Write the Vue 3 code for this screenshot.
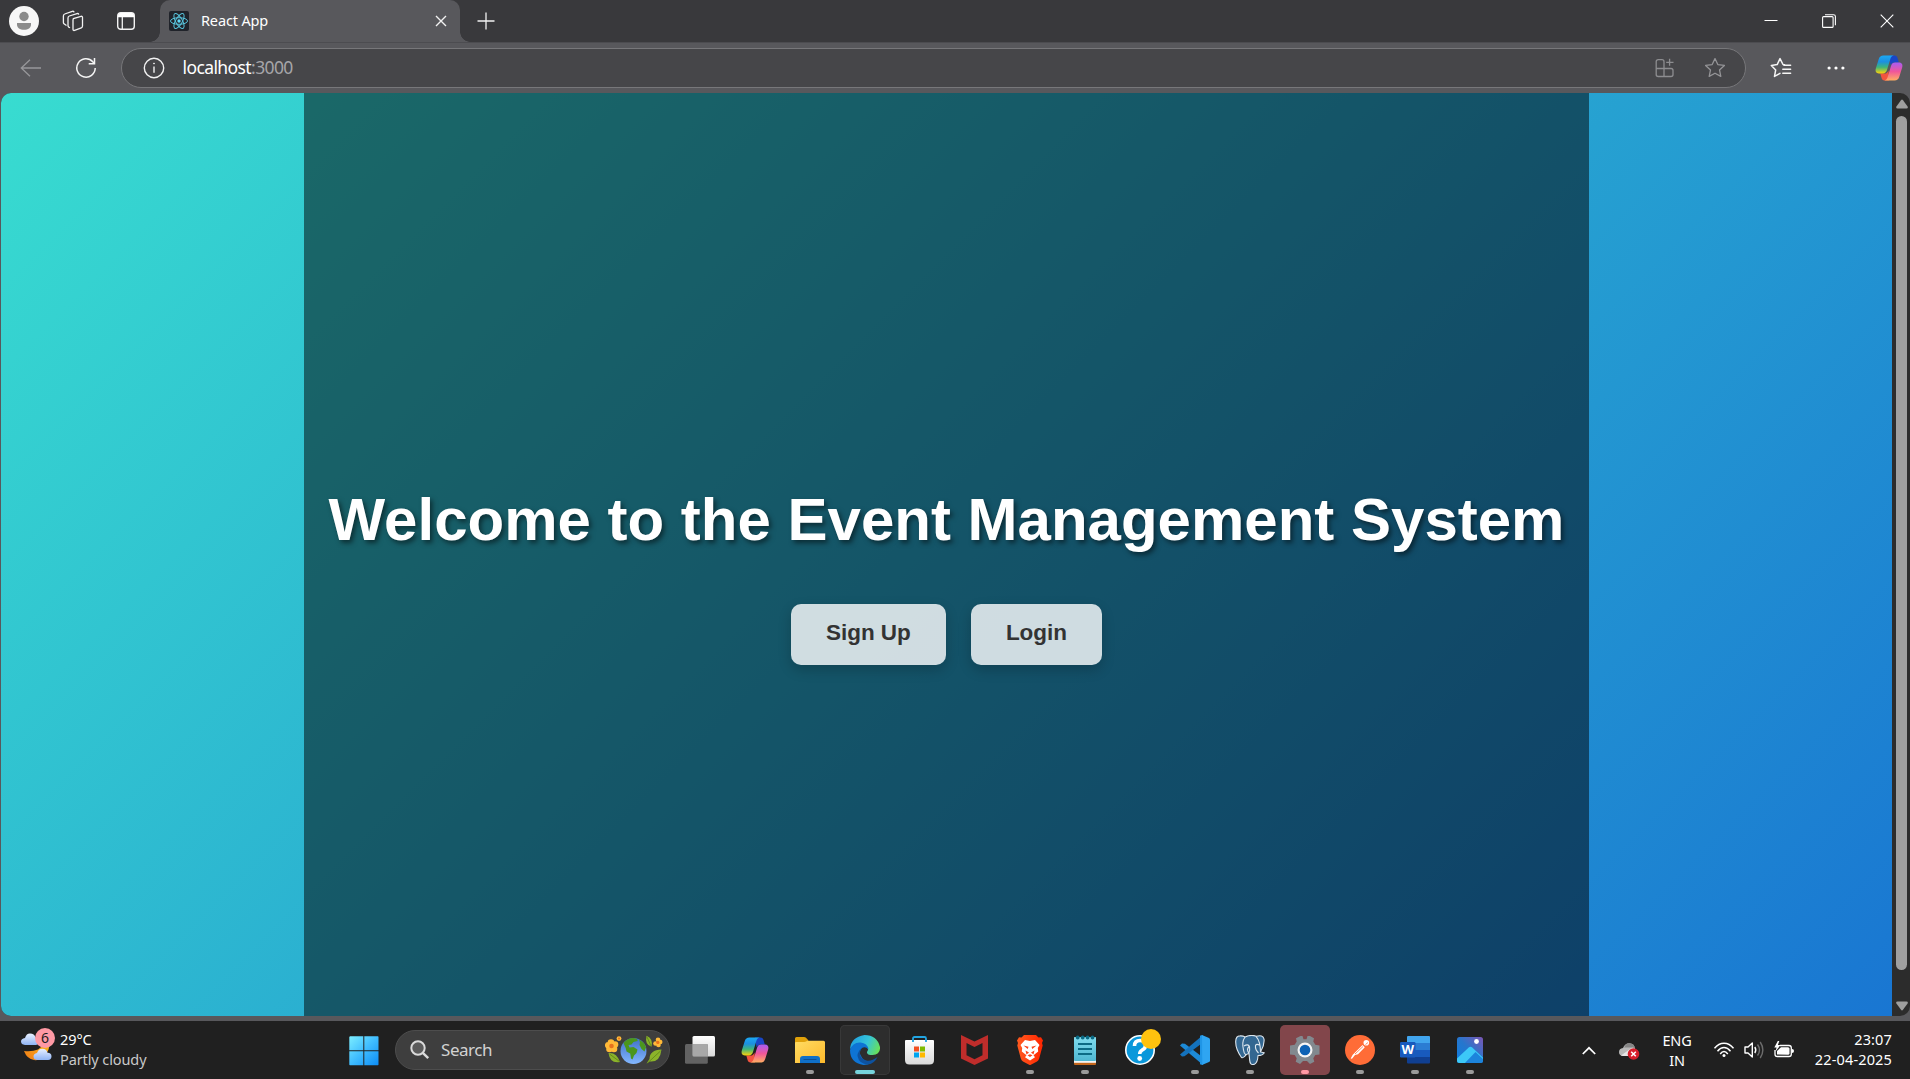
<script setup>
const title = 'Welcome to the Event Management System'
</script>

<template>
  <div class="screen">
    <svg class="defs" width="0" height="0">
      <defs>
        <linearGradient id="cpA" x1="0" y1="0" x2="0" y2="1">
          <stop offset="0" stop-color="#1ba9f4" /><stop offset=".35" stop-color="#1c8fe0" /><stop offset=".65" stop-color="#3fb579" /><stop offset="1" stop-color="#ffd20a" />
        </linearGradient>
        <linearGradient id="cpB" x1="0" y1="0" x2="0" y2="1">
          <stop offset="0" stop-color="#a65cf5" /><stop offset=".5" stop-color="#f0569a" /><stop offset="1" stop-color="#ffae62" />
        </linearGradient>
        <linearGradient id="folder" x1="0" y1="0" x2="1" y2="1">
          <stop offset="0" stop-color="#ffdc63" /><stop offset="1" stop-color="#fdb92b" />
        </linearGradient>
        <linearGradient id="edgeTop" x1="0" y1=".3" x2="1" y2=".6">
          <stop offset="0" stop-color="#1f9ee0" /><stop offset=".55" stop-color="#35c4d8" /><stop offset="1" stop-color="#68e05a" />
        </linearGradient>
        <linearGradient id="win" x1="0" y1="0" x2="1" y2="1">
          <stop offset="0" stop-color="#7ceeff" /><stop offset=".5" stop-color="#3fbcff" /><stop offset="1" stop-color="#0c8cf5" />
        </linearGradient>
        <linearGradient id="white" x1="0" y1="0" x2="0" y2="1"><stop offset="0" stop-color="#fff" /><stop offset="1" stop-color="#d9d9d9" /></linearGradient>
        <linearGradient id="brave" x1="0" y1="0" x2="1" y2="0"><stop offset="0" stop-color="#ff5a1f" /><stop offset="1" stop-color="#ff2500" /></linearGradient>
        <linearGradient id="note" x1="0" y1="0" x2="0" y2="1"><stop offset="0" stop-color="#80dcee" /><stop offset="1" stop-color="#4fb8d2" /></linearGradient>
        <linearGradient id="photo" x1="0" y1="1" x2="1" y2="0"><stop offset="0" stop-color="#0d7de0" /><stop offset=".5" stop-color="#2676cd" /><stop offset="1" stop-color="#7d56b4" /></linearGradient>
        <linearGradient id="cloud" x1="0" y1="0" x2="0" y2="1"><stop offset="0" stop-color="#e9f1ff" /><stop offset="1" stop-color="#8fb4f4" /></linearGradient>
        <linearGradient id="moon" x1="0" y1="1" x2="1" y2="0"><stop offset="0" stop-color="#f07a16" /><stop offset="1" stop-color="#ffc21c" /></linearGradient>
        <linearGradient id="globe" x1="0" y1="0" x2="0" y2="1"><stop offset="0" stop-color="#3f70c8" /><stop offset="1" stop-color="#83b7ff" /></linearGradient>
        <symbol id="copilot" viewBox="0 0 28 26">
          <path d="M14 .5h5.5c1.8 0 2.600 1 3.100 2.700l1.200 4.300h-4.300c-2 0-3.200 1-3.900 3.100z" fill="#1846c7" />
          <path d="M14 25.500H9.500c-1.700 0-2.500-1-3-2.700L5.300 18.500h4.200c2 0 3.300-1 4-3.100z" fill="#f2533f" />
          <path d="M8.500.5h10.200c-2 .3-2.900 1.800-3.500 4l-3.200 10.600c-.7 2.300-2 3.400-4.200 3.400H4C1 18.500 0 16.200.9 13.300L3.700 4.300C4.500 1.700 5.900.5 8.500.5z" fill="url(#cpA)" />
          <path d="M19.500 25.500H9.300c2-.3 2.900-1.800 3.500-4L16 10.900c.7-2.300 2-3.400 4.200-3.400H24c3 0 4 2.300 3.100 5.200l-2.800 9c-.8 2.600-2.200 3.800-4.800 3.800z" fill="url(#cpB)" />
        </symbol>
      </defs>
    </svg>

    <header class="strip">
      <div class="left-tools">
        <svg class="avatar" width="30" height="30" viewBox="0 0 30 30"><circle cx="15" cy="15" r="15" fill="#f7f7f7" /><circle cx="15" cy="10.500" r="4.700" fill="#8b8b8b" /><path d="M8 17h14v1.500c0 3.500-3 5.300-7 5.300s-7-1.800-7-5.300z" fill="#8b8b8b" /></svg>
        <svg width="22" height="22" viewBox="0 0 22 22" fill="none" stroke="#f2f2f2" stroke-width="1.300" stroke-linejoin="round"><path d="M11.300 8.600l7.700-2.300q1.500-.3 1.500 1.200v8.600q0 1.400-1.200 1.800l-6.700 2.500q-1.600.5-1.600-1.200v-9.200q0-1.100.8-1.400z" /><path d="M8 17.800l-1.200-.7q-.8-.5-.8-1.500V8q0-1.600 1.300-2L15 3.600q1.500-.4 1.700 1" /><path d="M4.500 15.500L2.300 14q-.9-.6-.9-1.600V6q0-1.600 1.300-2L10.300 1.300q1.500-.4 1.700 1" /></svg>
        <svg width="18" height="18" viewBox="0 0 18 18"><rect x=".7" y=".7" width="16.600" height="16.600" rx="3" fill="none" stroke="#f2f2f2" stroke-width="1.400" /><path d="M1 5.300V3.500Q1 1 3.500 1h11Q17 1 17 3.500v1.800z" fill="#fff" /><path d="M5.300 5v12" stroke="#f2f2f2" stroke-width="1.300" /></svg>
      </div>
      <div class="tab">
        <svg class="favicon" width="20" height="20" viewBox="0 0 20 20"><rect width="20" height="20" rx="2" fill="#20232a" /><g fill="none" stroke="#58c4dc" stroke-width="1"><ellipse cx="10" cy="10" rx="8.500" ry="3.300" /><ellipse cx="10" cy="10" rx="8.500" ry="3.300" transform="rotate(60 10 10)" /><ellipse cx="10" cy="10" rx="8.500" ry="3.300" transform="rotate(120 10 10)" /></g><circle cx="10" cy="10" r="1.700" fill="#61dafb" /></svg>
        <span class="tab-title">React App</span>
        <svg width="12" height="12" viewBox="0 0 12 12" stroke="#f2f2f2" stroke-width="1.400"><path d="M1 1l10 10M11 1L1 11" /></svg>
      </div>
      <svg class="plus" width="18" height="18" viewBox="0 0 18 18" stroke="#f2f2f2" stroke-width="1.300"><path d="M9 .5v17M.5 9h17" /></svg>
      <div class="window-controls">
        <svg width="14" height="14" viewBox="0 0 14 14"><path d="M.5 6.500h13" stroke="#fff" /></svg>
        <svg width="14" height="14" viewBox="0 0 14 14" fill="none" stroke="#fff" stroke-width="1.100"><rect x=".6" y="2.600" width="10.500" height="10.800" rx="1" /><path d="M3 .7h8.500q1.900 0 1.900 1.900v8.700" /></svg>
        <svg width="14" height="14" viewBox="0 0 14 14" stroke="#fff" stroke-width="1.100"><path d="M.7.7l12.600 12.600M13.300.7L.7 13.300" /></svg>
      </div>
    </header>

    <div class="toolbar">
      <svg class="back" width="22" height="18" viewBox="0 0 22 18" fill="none" stroke="#97979a" stroke-width="1.300"><path d="M10 .8L1.300 9l8.700 8.200M1.300 9H21" /></svg>
      <svg class="reload" width="22" height="22" viewBox="0 0 22 22" fill="none" stroke="#f5f5f5" stroke-width="1.500"><path d="M20.200 11a9.200 9.200 0 1 1-2.400-6.200l1.400 1.700" /><path d="M19.500 1v5.800h-5.800" /></svg>
      <div class="address">
        <svg width="22" height="22" viewBox="0 0 22 22" fill="none" stroke="#f2f2f2" stroke-width="1.400"><circle cx="11" cy="11" r="9.700" /><path d="M11 9.500v6.300" /><circle cx="11" cy="6.500" r=".5" fill="#f2f2f2" stroke-width=".9" /></svg>
        <span class="url"><b>localhost</b>:3000</span>
        <svg width="20" height="20" viewBox="0 0 20 20" fill="none" stroke="#8d8d90" stroke-width="1.300"><path d="M9 10.200V3.700Q9 1.700 7 1.700H3.200q-2 0-2 2V16.500q0 2 2 2H16q2 0 2-2v-4q0-2-2-2H1.200M9 10.500v8" /><path d="M14.600.8v7M11.200 4.300H18.500" /></svg>
        <svg class="star" width="22" height="22" viewBox="0 0 22 22" fill="none" stroke="#949497" stroke-width="1.300" stroke-linejoin="round"><path d="M11 1.600l2.800 6 6.600.8-4.900 4.500 1.300 6.500-5.800-3.200-5.800 3.200 1.300-6.500L1.600 8.400l6.600-.8z" /></svg>
      </div>
      <svg class="favs" width="22" height="22" viewBox="0 0 22 22" fill="none" stroke="#f5f5f5" stroke-width="1.500" stroke-linejoin="round" stroke-linecap="round"><path d="M14.500 7.700L13 7.500 10 1.600l-2.800 6L1.300 8.400l4.400 4.500-1.200 6.500 5.500-3.100" /><path d="M14 8.200h6.600M12.800 12.300h7.800M12.800 16.300h7.800" /></svg>
      <svg class="dots" width="18" height="4" viewBox="0 0 18 4" fill="#fff"><circle cx="2.100" cy="2" r="1.600" /><circle cx="9" cy="2" r="1.600" /><circle cx="15.900" cy="2" r="1.600" /></svg>
      <svg class="cp" width="28" height="26"><use href="#copilot" /></svg>
    </div>

    <div class="viewport">
      <div class="page">
        <main class="hero">
          <h1>{{ title }}</h1>
          <div class="actions"><button>Sign Up</button><button>Login</button></div>
        </main>
      </div>
      <div class="scrollbar">
        <svg width="12" height="10" viewBox="0 0 12 10"><path d="M5 1.200q1-1.200 2 0l4.600 6.300q.8 1.900-1.100 1.900h-9Q-.4 9.400.4 7.500z" fill="#9f9f9f" /></svg>
        <div class="thumb"></div>
        <svg width="12" height="10" viewBox="0 0 12 10"><path d="M5 8.800q1 1.200 2 0l4.600-6.300Q12.400.6 10.500.6h-9Q-.4.6.4 2.500z" fill="#9f9f9f" /></svg>
      </div>
    </div>

    <footer class="taskbar">
      <div class="weather">
        <div class="weather-icon">
          <svg width="32" height="30" viewBox="0 0 32 30"><path d="M3 19q8 1 14-1.500Q23 14 25 6l3 5q1 6-3 11-5 7-12 6Q6 27 3 19z" fill="url(#moon)" /><path d="M4 13q-4-.5-4-3.500 0-3 4-3.600Q5.500 1.500 9 1.600q4.500.2 5.500 4Q18 6 18 9.500q0 3-3 3.500z" fill="url(#cloud)" /><path d="M16 28q-3.500-.5-3.500-3.500 0-3 3.500-3.500 1.500-4.500 5.500-4.300 4 .1 5 4.100 4 .2 4 3.600 0 3-3.500 3.600z" fill="url(#cloud)" /></svg>
          <span class="badge">6</span>
        </div>
        <div class="weather-text"><span>29°C</span><span class="dim">Partly cloudy</span></div>
      </div>

      <div class="apps">
        <div class="app start"><svg width="30" height="30" viewBox="0 0 30 30"><path d="M1 .3h13.300v14H.3V1zM15.300.3h13.500q.7 0 .7.7v13.300H15.300zM.3 15.300h14v14H1q-.7 0-.7-.7zM15.300 15.300h14.200v13.300q0 .7-.7.700H15.300z" fill="url(#win)" /></svg></div>
        <div class="search">
          <svg width="20" height="20" viewBox="0 0 20 20" fill="none" stroke="#dadada" stroke-width="2"><circle cx="8" cy="8" r="6.700" fill="#5b5b5b" /><path d="M12.800 12.800l5.400 5.400" stroke-width="2.400" /></svg>
          <span>Search</span>
          <svg width="58" height="30" viewBox="0 0 58 30">
            <circle cx="28.500" cy="16" r="13" fill="url(#globe)" />
            <path d="M18.500 8q4-5 10-5 5 1 4 3l-4 1-2 2.500-3 .5 1 2.500 4-.5 4 2.500-1 3.500-2.500 2.500-1.500 4-1.500-1-.8-5-3.700-2-.8-3.500zM34 4.500q6 3 7 8l-1.500 4-3-2.500-2-4 .5-2.500z" fill="#4b961d" />
            <g fill="#ffb938"><circle cx="6" cy="7.500" r="3.300" /><circle cx="10" cy="9.500" r="3.300" /><circle cx="9" cy="14" r="3.300" /><circle cx="4.500" cy="14" r="3.300" /><circle cx="3.200" cy="10.200" r="3.300" /><circle cx="14" cy="3.600" r="2.400" /><circle cx="53" cy="4.800" r="2.300" /><circle cx="55.200" cy="7" r="2.300" /><circle cx="53.500" cy="10" r="2.300" /><circle cx="50.500" cy="8.500" r="2.300" /></g>
            <g fill="#e8721c"><circle cx="6.500" cy="11" r="2.300" /><circle cx="14" cy="3.600" r="1" /><circle cx="52.800" cy="7.400" r="1.600" /></g>
            <path d="M3.500 18q8-1 11.500 9-10 2-11.500-9zM41.500.8q7 3 5 11-7-2-5-11zM56.500 14.500q-12 .5-12 9.500l-3 4.500 3.500-2q10 1 11.500-12z" fill="#8bb32a" />
            <path d="M4.500 19l10 7.500M42 2l4 9M55.500 16l-13 12" stroke="#557c12" stroke-width=".7" />
          </svg>
        </div>
        <div class="app"><svg width="30" height="28" viewBox="0 0 30 28"><rect x="7.500" y="0" width="22.500" height="20.500" rx="1.500" fill="url(#white)" /><rect x="0" y="8" width="22.800" height="19.800" rx="1.500" fill="#6e6e6e" fill-opacity=".85" /><path d="M7.500 8h15.300v12.500H9q-1.500 0-1.500-1.500z" fill="#a8a8a8" /></svg></div>
        <div class="app"><svg width="28" height="26"><use href="#copilot" /></svg></div>
        <div class="app"><svg width="30" height="26" viewBox="0 0 30 26"><path d="M0 8V1.500Q0 0 1.500 0H9q1.300 0 2 .8L13.500 3.500 9 8z" fill="#e0a10a" /><path d="M0 6q0-1 1-1h8q1.500 0 2.500-.8l1-.5H28.500q1.500 0 1.500 1.500V26H0z" fill="url(#folder)" /><path d="M5 26v-4q0-3 3-3h14q3 0 3 3v4z" fill="#0f70c8" /><path d="M9 22.500h12" stroke="#0b4f95" stroke-width="1.200" stroke-linecap="round" /></svg><i class="dot"></i></div>
        <div class="app active"><svg width="30" height="30" viewBox="0 0 30 30"><path d="M0 14Q1 2 14.500 0 27 0 30 12q.5 7.500-7.500 8-6 0-5.500-3 2.500-3.500-1-6Q9 6 0 14z" fill="url(#edgeTop)" /><path d="M0 15Q2.500 7 10.500 7.500q7 .5 8 7-3-3.500-6.500-1.500-4.500 4 .5 10.500Q17 28.500 21 28q-3 2-7.500 2Q0 28 0 15z" fill="#0e74d4" /><path d="M10 16q-1 8 6.500 9.500 5 1 11-3.500Q24.500 28.500 18 29.500 9 29 7.500 21q0-5 5-8.500Q10 14.500 10 16z" fill="#0d529f" /></svg><i class="dot wide"></i></div>
        <div class="app"><svg class="store" width="29" height="30" viewBox="0 0 29 30"><path d="M0 6q0-1 1-1h27q1 0 1 1v19q0 4.500-4.500 4.500h-20Q0 29.500 0 25z" fill="url(#white)" /><path d="M8 7V3.500Q8 2 9.500 2h10Q21 2 21 3.500V7" fill="none" stroke="#22a5e2" stroke-width="1.800" /><path d="M9 11.500h5v5H9z" fill="#f25022" /><path d="M15 11.500h5v5h-5z" fill="#7fba00" /><path d="M9 17.500h5v5H9z" fill="#00a4ef" /><path d="M15 17.500h5v5h-5z" fill="#ffb900" /></svg></div>
        <div class="app"><svg class="shield" width="27" height="30" viewBox="0 0 27 30"><path fill-rule="evenodd" d="M0 0l13.500 6.500L27 0v23.500L13.500 30 0 23.500zM5.500 8v12.300l8 3.900 8-3.900V8l-8 4z" fill="#bf2d2b" /></svg></div>
        <div class="app"><svg width="26" height="30" viewBox="0 0 26 30"><path d="M7 0h12l2.500 2.500 2.500-.3 2 3.300-1 2.500.7 2.500-3.500 13q-.6 2-2.200 3L13 30.200 6 26.500q-1.600-1-2.200-3L.3 10.500 1 8 0 5.500l2-3.300 2.500.3z" fill="url(#brave)" /><path d="M8 5l5 1 5-1 4.500 5-1.700 3 .4 3.500-4.700 3.800 1.500 2L13 25.500l-5-3.200 1.500-2-4.700-3.800.4-3.500-1.700-3z" fill="#fff" /><path d="M6.500 10.500l5 1.200-.8 2.300zM19.500 10.500l-5 1.200.8 2.300zM8.500 15.500l3.500 2-2.500 2zM17.500 15.500l-3.500 2 2.500 2zM10.500 20.300L13 19.200l2.500 1.100L13 22z" fill="#fb431b" /></svg><i class="dot"></i></div>
        <div class="app"><svg width="22" height="30" viewBox="0 0 22 30"><rect x="0" y="2" width="22" height="28" rx="1" fill="#c3661b" /><rect y="24" width="22" height="3.800" fill="#f3f3f3" /><rect x="0" y="2" width="22" height="24" rx="1" fill="url(#note)" /><path d="M4 9h14M4 14h14M4 19h14" stroke="#0c6b85" stroke-width="1.800" /><g fill="#0c6b85"><circle cx="3.700" cy="2.500" r="1.900" /><circle cx="8.700" cy="2.500" r="1.900" /><circle cx="13.600" cy="2.500" r="1.900" /><circle cx="18.500" cy="2.500" r="1.900" /></g></svg><i class="dot"></i></div>
        <div class="app"><svg width="30" height="30" viewBox="0 0 30 30"><circle cx="15" cy="15" r="14.200" fill="#0a98db" stroke="#fff" stroke-width="1.600" /><path d="M9.500 11q0-5.500 5.500-5.500t5.500 5q0 3-3.500 4.700-2.300 1.300-2.300 3.800" fill="none" stroke="#fff" stroke-width="3.600" /><circle cx="14.700" cy="23.500" r="2.400" fill="#fff" /></svg><i class="notice"></i></div>
        <div class="app"><svg width="30" height="30" viewBox="0 0 30 30"><path d="M0 10.500l2-2 3 .2L23 22.500V30z" fill="#1d8ad6" /><path d="M0 19.500L23 0v7.500L4.500 21.300l-2.500.2z" fill="#1472bd" /><path d="M22 0l7 3q1 .5 1 1.500v21q0 1-1 1.500l-7 3V0z" fill="#2fa5f2" /><path d="M22 0l.3 30-2.300-.8V.8z" fill="#1f95e6" /></svg><i class="dot"></i></div>
        <div class="app"><svg width="30" height="30" viewBox="0 0 30 30" fill="#336791" stroke="#dce6ee" stroke-width="1.100" stroke-linejoin="round"><path d="M6.500 22.500Q.5 14 .7 6.500.8 1 5 .9q3-.2 5 1Q17-.8 21 1.300q7-2 8 2.700.7 6.500-3.500 13l3.800.7q-1.500 2.800-6.300 2.800-.3 7.500-4 8.900-4 .8-4.300-4L14 18.500q-2.500.5-3 1.500-2.500 3.500-4.500 2.500z" /><path d="M10 2Q6.500 7 8.500 15q.2 3 2.500 5M9 11q4-2.500 5.500.5.700 4-.7 7M21 1.300q4.500 5 4.500 15.700M24.500 10q-3-1.500-4 .5-.5 4 3 7.500M14 18.500q-3-4 0-7" fill="none" /></svg><i class="dot"></i></div>
        <div class="app alert"><svg width="30" height="30" viewBox="0 0 30 30"><path d="M10.500 1h2l1 3.200h3l1-3.200h2.500l4 2.300-.7 3.300 2 3.200 4.200.7v9l-4.200.5-2 3.300 1 3.500-4.300 2.200-3-3h-4l-3 3-4.300-2.200 1-3.500-2-3.300L0 19.500v-9l4.700-.7 2-3.200L6 3.300z" fill="#82898f" /><circle cx="15" cy="15" r="7.500" fill="#f4f4f4" /><circle cx="15" cy="15" r="5.300" fill="#0d62b5" /></svg><i class="dot pink"></i></div>
        <div class="app"><svg width="30" height="30" viewBox="0 0 30 30"><circle cx="15" cy="15" r="15" fill="#ff6c37" /><circle cx="21.300" cy="7.700" r="2.800" fill="#fff" /><path d="M17.500 10l2.300 2.300-6.800 7-3 .7L7 23.800l-1.300-.2 2-3.800z" fill="#fff" /><path d="M10 19l8-7.500M20.500 9.500l2.500-2" stroke="#ff6c37" stroke-width=".8" /></svg><i class="dot"></i></div>
        <div class="app"><svg width="30" height="28" viewBox="0 0 30 28"><path d="M8 0h21q1 0 1 1v6H7V1q0-1 1-1z" fill="#41a5ee" /><path d="M7 7h23v7H7z" fill="#2b7cd3" /><path d="M7 14h23v7H7z" fill="#185abd" /><path d="M7 21h23v5.500q0 1-1 1H8q-1 0-1-1z" fill="#103f91" /><rect y="6" width="15.500" height="15.500" rx="1.200" fill="#185abd" /><text x="7.700" y="18" text-anchor="middle" class="word">W</text></svg><i class="dot"></i></div>
        <div class="app"><svg width="26" height="26" viewBox="0 0 26 26"><rect width="26" height="26" rx="2.500" fill="url(#photo)" /><path d="M9 26l9.500-12.300L26 20.500v3q0 2.500-2.500 2.500z" fill="#1c84dc" /><path d="M0 21.500L12 10.300q1.500-1.300 3 0L26 20.700v1.300L18.500 15 8 26H2.500Q0 26 0 23.500z" fill="#3cc8f8" /><circle cx="19.500" cy="4.500" r="2.400" fill="#fff" /></svg><i class="dot"></i></div>
      </div>

      <div class="tray">
        <svg class="chev" width="14" height="9" viewBox="0 0 14 9" fill="none" stroke="#fff" stroke-width="1.700"><path d="M.8 8L7 1.800 13.200 8" /></svg>
        <svg class="drive" width="21" height="18" viewBox="0 0 21 18"><path d="M4 14q-4-.3-4-4 0-3.600 4-4Q6 1 10.500 1.200 15.500 1.500 16 7q2 4-2 7z" fill="#b9b9b9" /><path d="M2 13.500L14 5l3 3-2 6H4z" fill="#e6e6e6" /><path d="M5 5.500Q7 1 10.500 1.200 15 1.500 16 6l-3-.5z" fill="#858585" /><circle cx="14.500" cy="12" r="5.800" fill="#d61f2c" /><path d="M12.200 9.700l4.600 4.600M16.800 9.700l-4.600 4.600" stroke="#fff" stroke-width="1.500" /></svg>
        <div class="lang"><span>ENG</span><span>IN</span></div>
        <svg class="wifi" width="20" height="16" viewBox="0 0 20 16" fill="none" stroke="#fff" stroke-width="1.500"><path d="M.5 6.300Q4.500 1.300 10 1.300t9.500 5M3.500 9.200Q6.500 5.600 10 5.600t6.500 3.600M6.200 12Q8 9.600 10 9.600T13.800 12" /><circle cx="10" cy="13.500" r="1.500" fill="#fff" stroke="none" /></svg>
        <svg class="sound" width="20" height="18" viewBox="0 0 20 18" fill="none" stroke="#fff" stroke-width="1.400"><path d="M1 6h3l4.300-4v14L4 12H1z" stroke-linejoin="round" /><path d="M10.800 6q2 3 0 6" /><path d="M13.500 3.500q4 5.500 0 11M16.200 1q5.300 8 0 16" stroke="#6c6c6c" /></svg>
        <svg class="battery" width="20" height="17" viewBox="0 0 20 17"><path d="M6 4.500h9q2.300 0 2.300 2.300v6.400q0 2.300-2.300 2.300H3.300Q1 15.500 1 13.200V9" fill="none" stroke="#fff" stroke-width="1.300" /><path d="M3 13.500V10l4-3.700h7q1.500 0 1.500 1.500v4.400q0 1.500-1.500 1.500z" fill="#fff" /><path d="M18 8q2 0 2 2t-2 2z" fill="#fff" /><path d="M3.800 0L.3 6.400h2.300L1.500 10.500 6.500 4H3.900L5.300 0z" fill="#fff" /></svg>
        <div class="clock"><span>23:07</span><span>22-04-2025</span></div>
      </div>
    </footer>
  </div>
</template>

<style>
html, body { margin: 0; background: #202020; overflow: hidden; }
</style>

<style scoped>
.screen { width: 1910px; height: 1079px; display: flex; flex-direction: column; background: #58585c; font-family: "Noto Sans", "Open Sans", sans-serif; color: #fff; overflow: hidden; }
.defs { position: absolute; }
svg { display: block; flex: none; }

.strip { height: 42px; display: flex; align-items: center; background: #39393c; flex: none; }
.left-tools { width: 151px; height: 100%; margin-right: 9px; box-sizing: border-box; padding-left: 9px; display: flex; align-items: center; background: #39393c; }
.left-tools svg + svg { margin-left: 23px; }
.left-tools svg:last-child { margin-left: 33px; }
.tab { position: relative; width: 300px; height: 42px; box-sizing: border-box; padding: 0 13px 0 9px; display: flex; align-items: center; background: #58585c; border-radius: 10px 10px 0 0; }
.tab::before, .tab::after { content: ""; position: absolute; bottom: 0; width: 10px; height: 10px; }
.tab::before { left: -10px; background: radial-gradient(circle at 0 0, #39393c 9.500px, #58585c 10px); }
.tab::after { right: -10px; background: radial-gradient(circle at 100% 0, #39393c 9.500px, #58585c 10px); }
.tab-title { flex: 1; margin-left: 12px; font-size: 14.500px; letter-spacing: -.15px; line-height: 40px; padding-bottom: 2px; }
.plus { margin-left: 17px; }
.window-controls { margin: 0 16px 0 auto; display: flex; gap: 44px; }

.toolbar { height: 51px; display: flex; align-items: center; flex: none; box-sizing: border-box; border-top: 1px solid #4c4c50; padding-bottom: 1px; }
.back { margin-left: 20px; }
.reload { margin: 0 24px 0 33px; }
.address { width: 1625px; height: 40px; box-sizing: border-box; border: 1px solid #77777a; border-radius: 20px; background: #464649; display: flex; align-items: center; padding: 0 19px 0 20.500px; }
.url { flex: 1; margin-left: 18px; font-size: 17.500px; letter-spacing: -.6px; line-height: 36px; padding-bottom: 2px; color: #a5a5a8; }
.url b { font-weight: 400; color: #fff; }
.star { margin-left: 29px; }
.favs { margin-left: 24px; }
.dots { margin-left: 35px; }
.cp { margin-left: 30px; }

.viewport { height: 923px; margin: 0 0 0 1px; display: flex; flex: none; border-radius: 10px; overflow: hidden; background: #2c2c2c; }
.page { width: 1891px; display: flex; justify-content: center; background: linear-gradient(135deg, #38dcd0, #1976d2); }
.hero { width: 1285px; box-sizing: border-box; padding: 0 25px; background: rgba(0, 0, 0, .5); display: flex; flex-direction: column; align-items: center; font-family: "Liberation Sans", Arial, sans-serif; }
h1 { margin: 392px 0 0; font-size: 60px; line-height: 69px; font-weight: 700; white-space: nowrap; text-shadow: 2.500px 2.500px 5px rgba(0, 0, 0, .5); }
.actions { margin-top: 50px; display: flex; gap: 25px; }
button { height: 61px; padding: 0 35px 3px; border: 0; border-radius: 10px; background: rgba(255, 255, 255, .8); color: #333; font: 700 22.500px "Liberation Sans", Arial, sans-serif; box-shadow: 0 5px 12.500px rgba(0, 0, 0, .2); }
.scrollbar { width: 18px; display: flex; flex-direction: column; align-items: center; box-sizing: border-box; padding: 6px 0 5px 1px; }
.thumb { width: 11px; height: 854px; margin: 7px 0 auto; border-radius: 6px; background: #9f9f9f; }

.taskbar { position: relative; height: 58px; margin-top: 5px; display: flex; flex: none; background: #202020; font-size: 14.500px; line-height: 20px; }
.weather { width: 338px; display: flex; box-sizing: border-box; padding: 6px 0 0 21px; }
.weather-icon { position: relative; width: 32px; padding-top: 5px; }
.badge { position: absolute; left: 14px; top: 1px; width: 20px; height: 20px; border-radius: 50%; background: #ff99a4; color: #1c1c1c; text-align: center; font-size: 14px; line-height: 20px; }
.weather-text { display: flex; flex-direction: column; margin-left: 7px; padding-top: 2px; letter-spacing: -.1px; white-space: nowrap; }
.dim { color: #c9c9c9; }
.apps { display: flex; gap: 5px; padding-top: 4px; }
.app { position: relative; width: 50px; height: 50px; display: flex; align-items: center; justify-content: center; border-radius: 5px; }
.start { margin-right: 2px; }
.start svg { margin: 1px 0 0 1px; }
.store, .shield { margin-right: 1px; }
.active { background: #2d2d2d; box-shadow: inset 0 0 0 1px #383838; }
.alert { background: #82464b; }
.dot { position: absolute; bottom: 1px; left: 21px; width: 8px; height: 4px; border-radius: 2px; background: #9a9a9a; }
.dot.wide { left: 15px; width: 20px; background: #76d3dc; }
.dot.pink { background: #ff99a4; }
.notice { position: absolute; left: 26px; top: 4px; width: 20px; height: 20px; border-radius: 50%; background: #ffc20e; }
.word { font: 700 13px "Open Sans", sans-serif; fill: #fff; }
.search { width: 275px; height: 40px; margin-top: 5px; box-sizing: border-box; border: 1px solid #4d4d4d; border-radius: 20px; background: #3e3e3e; display: flex; align-items: center; padding: 0 6px 0 14px; color: #d2d2d2; font-size: 17px; }
.search span { flex: 1; margin-left: 11px; letter-spacing: -.45px; }
.tray { margin-left: auto; display: flex; align-items: center; padding-right: 18px; }
.drive { margin: 2px 0 0 23px; }
.lang { margin-left: 21px; width: 32px; display: flex; flex-direction: column; align-items: center; padding-bottom: 1px; letter-spacing: -.2px; }
.wifi { margin-left: 21px; }
.sound { margin-left: 10px; }
.battery { margin: 0 0 2px 10px; }
.clock { display: flex; flex-direction: column; align-items: flex-end; width: 98px; padding-bottom: 3px; letter-spacing: .15px; }
</style>
